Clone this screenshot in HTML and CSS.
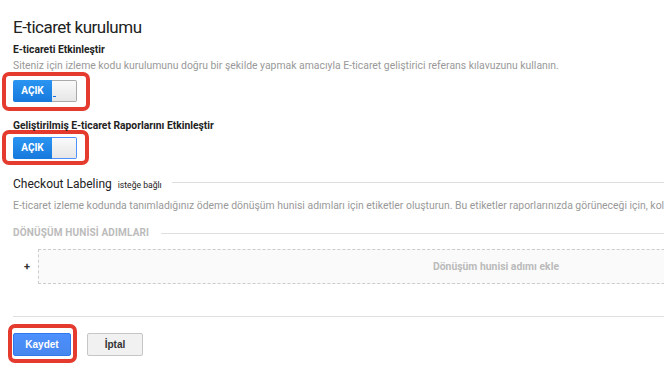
FILE: index.html
```html
<!DOCTYPE html>
<html lang="tr">
<head>
    <meta charset="UTF-8">
    <meta name="viewport" content="width=device-width, initial-scale=1.0">
    <title>E-ticaret kurulumu</title>
    <link rel="stylesheet" href="styles.css">
</head>
<body>
    <div class="page">
        <h1 class="title">E-ticaret kurulumu</h1>

        <div class="field-label label-first">E-ticareti Etkinleştir</div>
        <div class="hint">Siteniz için izleme kodu kurulumunu doğru bir şekilde yapmak amacıyla E-ticaret geliştirici referans kılavuzunu kullanın.</div>
        <div class="mark mark-one">
            <div class="toggle">
                <span class="toggle-on">AÇIK</span>
                <span class="toggle-knob"><span class="caret"></span></span>
            </div>
        </div>

        <div class="field-label label-second">Geliştirilmiş E-ticaret Raporlarını Etkinleştir</div>
        <div class="mark mark-two">
            <div class="toggle">
                <span class="toggle-on">AÇIK</span>
                <span class="toggle-knob focused"></span>
            </div>
        </div>

        <div class="section-head">
            <span class="section-text">
                <span class="section-title">Checkout Labeling</span>
                <span class="optional">isteğe bağlı</span>
            </span>
        </div>
        <div class="hint hint-wide">E-ticaret izleme kodunda tanımladığınız ödeme dönüşüm hunisi adımları için etiketler oluşturun. Bu etiketler raporlarınızda görüneceği için, kolayca anlaşılır adlar kullanın.</div>

        <div class="sub-head">DÖNÜŞÜM HUNİSİ ADIMLARI</div>
        <div class="step-row">
            <span class="plus">+</span>
            <div class="step-box">Dönüşüm hunisi adımı ekle</div>
        </div>

        <div class="actions">
            <div class="mark mark-save">
                <button class="btn btn-save">Kaydet</button>
            </div>
            <button class="btn btn-cancel">İptal</button>
        </div>
    </div>
</body>
</html>
```

FILE: styles.css
```css
/* page */
body {
    margin: 0;
    padding: 0;
    background: #fff;
    font-family: Roboto, "Liberation Sans", sans-serif;
    color: #333;
    overflow: hidden;
}

.page {
    width: 941px;
    padding-left: 13px;
}

.title {
    margin: 0;
    padding-top: 16px;
    font-size: 17px;
    font-weight: 400;
    letter-spacing: -0.5px;
    line-height: 22px;
    color: #222;
}

.field-label {
    font-size: 10.3px;
    font-weight: bold;
    line-height: 14px;
    color: #222;
}

.label-first {
    margin-top: 5px;
}

.label-second {
    margin-top: 8px;
}

.hint {
    margin-top: 2px;
    font-size: 10.4px;
    line-height: 14px;
    color: #999;
    white-space: nowrap;
}

.hint-wide {
    margin-top: 8px;
}

/* red annotation boxes */
.mark {
    display: inline-block;
    vertical-align: top;
    border: 4px solid #e53b2f;
    border-radius: 7px;
    margin-left: -11px;
}

.mark-one {
    display: table;
    margin-top: -1px;
    padding: 4px 9px 5px 7px;
}

.mark-two {
    display: table;
    margin-top: -3px;
    padding: 3px 8px 2px 7px;
}

.mark-save {
    margin-left: -5px;
    padding: 5px 2px 3px 1px;
}

/* switch */
.toggle {
    display: flex;
    width: 64px;
    height: 22px;
}

.toggle-on {
    width: 39px;
    background: linear-gradient(#2b95f2, #1679dc);
    border-radius: 2px 0 0 2px;
    color: #fff;
    font-size: 10px;
    font-weight: bold;
    line-height: 22px;
    text-align: center;
}

.toggle-knob {
    position: relative;
    flex: 1;
    border: 1px solid #aaa;
    border-left: none;
    border-radius: 0 2px 2px 0;
    background: linear-gradient(#fafafa, #e6e6e6);
}

.toggle-knob.focused {
    border-color: #4d90fe;
}

.caret {
    position: absolute;
    left: 1px;
    top: 15px;
    width: 3px;
    height: 1px;
    background: #1a73e8;
}

/* checkout labeling */
.section-head {
    display: flex;
    align-items: center;
    margin-top: 8px;
    height: 18px;
}

.section-title {
    font-size: 12px;
    color: #222;
}

.optional {
    margin-left: 2px;
    font-size: 8.6px;
    color: #222;
}

.section-head::after {
    content: "";
    flex: 1;
    height: 1px;
    margin-left: 10px;
    background: #ddd;
}

.sub-head {
    display: flex;
    align-items: center;
    margin-top: 13px;
    font-size: 10px;
    font-weight: bold;
    letter-spacing: 0.15px;
    line-height: 14px;
    color: #bbb;
}

.sub-head::after {
    content: "";
    flex: 1;
    height: 1px;
    margin-left: 12px;
    background: #e0e0e0;
}

.step-row {
    display: flex;
    align-items: center;
    margin-top: 9px;
}

.plus {
    width: 25px;
    padding-left: 11px;
    box-sizing: border-box;
    font-size: 11px;
    font-weight: bold;
    color: #333;
}

.step-box {
    flex: 1;
    height: 33px;
    border: 1px dashed #ccc;
    background: #fafafa;
    color: #bbb;
    font-size: 10.4px;
    font-weight: bold;
    line-height: 33px;
    text-align: center;
}

/* buttons */
.actions {
    display: flex;
    align-items: flex-start;
    gap: 10px;
    margin-top: 32px;
    padding-top: 7px;
    border-top: 1px solid #e0e0e0;
}

.btn {
    height: 23px;
    border-radius: 2px;
    font-family: "Liberation Sans", Arial, sans-serif;
    font-size: 10px;
    font-weight: bold;
    cursor: pointer;
}

.btn-save {
    display: block;
    width: 58px;
    background: linear-gradient(#4d90fe, #4787ed);
    border: 1px solid #3079ed;
    color: #fff;
}

.btn-cancel {
    width: 56px;
    margin-top: 9px;
    background: #f1f1f1;
    border: 1px solid #c6c6c6;
    color: #333;
}
```
